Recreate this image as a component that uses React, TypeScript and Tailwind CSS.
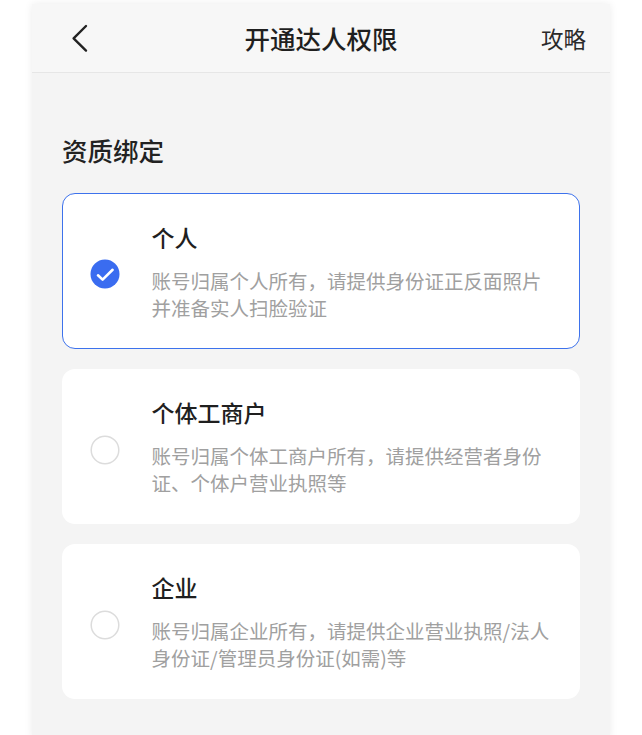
import React from "react";

type Item = { title: string; desc: string; checked?: boolean };

const items: Item[] = [
  { title: "个人", desc: "账号归属个人所有，请提供身份证正反面照片并准备实人扫脸验证", checked: true },
  { title: "个体工商户", desc: "账号归属个体工商户所有，请提供经营者身份证、个体户营业执照等" },
  { title: "企业", desc: "账号归属企业所有，请提供企业营业执照/法人身份证/管理员身份证(如需)等" },
];

function Radio({ checked }: { checked?: boolean }) {
  if (checked) {
    return (
      <svg width="30" height="30" viewBox="0 0 30 30" className="shrink-0 mt-[6px]">
        <circle cx="15" cy="15" r="14.5" fill="#3a6cf0" />
        <path d="M8 16.3 L12.6 20.6 L22.6 10.8" fill="none" stroke="#fff" strokeWidth="2.6" strokeLinecap="round" strokeLinejoin="round" />
      </svg>
    );
  }
  return (
    <svg width="30" height="30" viewBox="0 0 30 30" className="shrink-0 mt-[6px]">
      <circle cx="15" cy="15" r="13.8" fill="#fff" stroke="#dcdcdc" strokeWidth="1.5" />
    </svg>
  );
}

export default function App() {
  return (
    <div
      className="min-h-[735px] w-full bg-white pt-[4px]"
      style={{ fontFamily: '"Noto Sans CJK SC", "Noto Sans", sans-serif' }}
    >
      <div className="mx-[32px] min-h-[731px] bg-[#f4f4f4] shadow-[0_0_8px_rgba(0,0,0,0.08)]">
        <div className="grid h-[69px] grid-cols-[1fr_auto_1fr] items-center border-b border-[#e6e6e6] bg-[#f7f7f7]">
          <div className="pl-[38px]">
            <svg width="20" height="30" viewBox="0 0 20 30" className="block">
              <path d="M16 3 L3.6 15.3 L16 27.6" fill="none" stroke="#222" strokeWidth="2.4" strokeLinecap="round" strokeLinejoin="round" />
            </svg>
          </div>
          <div className="text-[25.5px] font-medium leading-[36px] text-[#1f1f1f]">开通达人权限</div>
          <div className="pr-[24px] text-right text-[22.5px] leading-[32px] text-[#2a2a2a]">攻略</div>
        </div>
        <div className="px-[30px] pb-[40px]">
          <div className="pt-[59px] text-[25.5px] font-medium leading-[36px] text-[#222]">资质绑定</div>
          <div className="mt-[25px] flex flex-col gap-[20px]">
            {items.map((it) => (
              <div
                key={it.title}
                className={
                  it.checked
                    ? "flex h-[156px] items-center rounded-[13px] border-[1.5px] border-[#3d72ec] bg-white pl-[26.5px] pr-[21px]"
                    : "flex h-[155px] items-center rounded-[13px] border-[1.5px] border-transparent bg-white pl-[26.5px] pr-[21px]"
                }
              >
                <Radio checked={it.checked} />
                <div className="ml-[32px] flex-1">
                  <div className="text-[23px] font-medium leading-[30px] text-[#1f1f1f]">{it.title}</div>
                  <div className="mt-[15px] text-[19.5px] leading-[27px] text-[#a0a0a0]">{it.desc}</div>
                </div>
              </div>
            ))}
          </div>
        </div>
      </div>
    </div>
  );
}
